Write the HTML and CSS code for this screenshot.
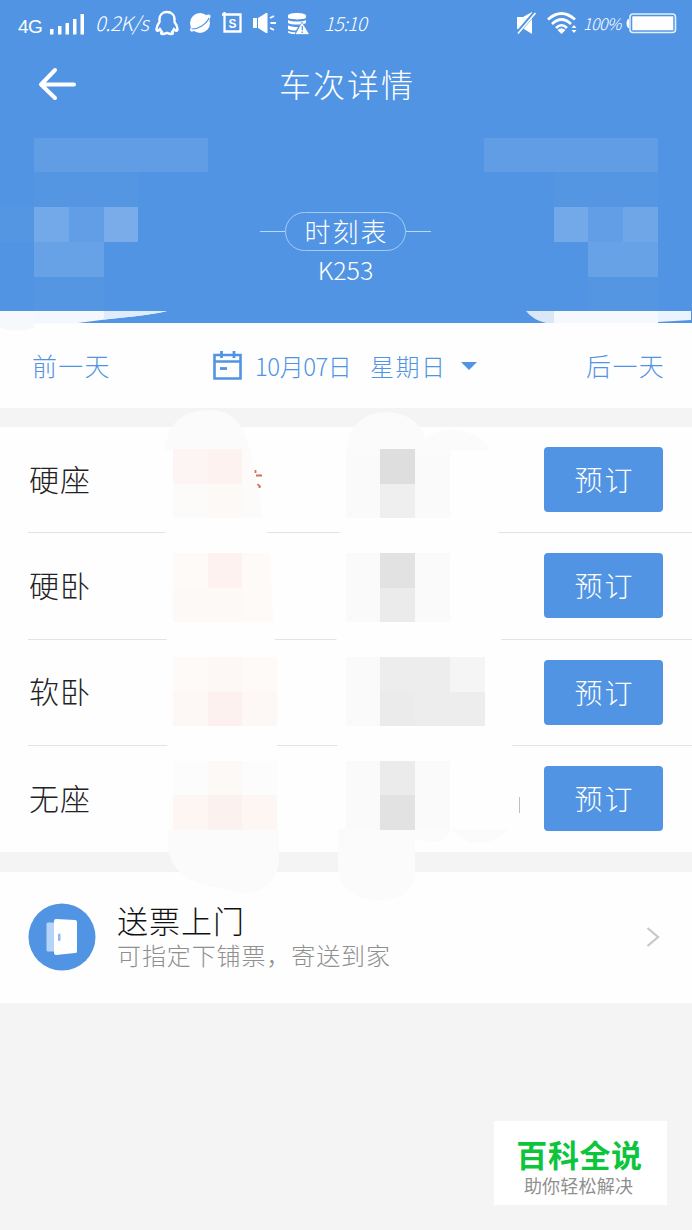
FILE: index.html
```html
<!DOCTYPE html>
<html lang="zh-CN">
<head>
<meta charset="utf-8">
<title>车次详情</title>
<link rel="stylesheet" href="styles.css">
</head>
<body>
<div class="screen">
  <header class="hero">
    <div class="status">
      <div class="status-left">
        <span class="net">4G</span>
        <svg class="signal" width="36" height="22" viewBox="0 0 36 22" fill="#fff"><path d="M1 16h3.500v5.500H1zM9 13h3.500v8.500H9zM16.500 10H20v11.500h-3.500zM24 6h3.500v15.500H24zM31.500 1H35v20.500h-3.500z"/></svg>
        <span class="speed">0.2K/s</span>
        <svg class="qq" width="24" height="26" viewBox="0 0 24 26" fill="none" stroke="#fff" stroke-width="2.400" stroke-linejoin="round" stroke-linecap="round"><path d="M12 2C7.500 2 4.500 5 4.500 9v3C3 14 1.500 16.500 1.500 19c0 1 .5 1.800 1.200 1.800.8 0 1.700-1 2.300-2 .4 1.400 1 2.300 2 3.100C4.500 23.800 7 25 12 22.800c5 2.200 7.500 1 5-.9 1-.8 1.600-1.700 2-3.100.6 1 1.500 2 2.300 2 .7 0 1.200-.8 1.200-1.800 0-2.500-1.500-5-3-7V9C19.500 5 16.500 2 12 2z"/></svg>
        <svg class="ball" width="23" height="22" viewBox="0 0 23 22"><circle cx="11" cy="11" r="10" fill="#fff"/><path d="M17 3q5-1.500 4.500 2T17 12zM3 14q-3 3.500-1.500 5T7 18z" fill="#fff"/><path d="M2.500 17C9 17.500 17.500 12 20 6" fill="none" stroke="#5194e3" stroke-width="1.100"/></svg>
        <svg class="box" width="21" height="22" viewBox="0 0 21 22"><path d="M0 2.500h18.500v17H2.500V0" fill="none" stroke="#fff" stroke-width="2.300"/><text x="10.500" y="15.500" text-anchor="middle" class="box-letter">S</text></svg>
        <svg class="speaker" width="25" height="22" viewBox="0 0 25 22" fill="#fff"><path d="M1 6h4v10H1zM6 6l8-5h1.500v20H14l-8-5z"/><path d="M18 6l4-2M18.500 11H24M18 16l4 2" stroke="#fff" stroke-width="1.800"/></svg>
        <svg class="db" width="23" height="23" viewBox="0 0 23 23"><path fill="#fff" d="M1 3.500C1 0 19 0 19 3.500v2C19 8 1 8 1 5.500zM1 8c3 2 15 2 18 0v3C16 13 4 13 1 11zM1 13.500c3 1.500 7 1.500 10 1.500l-2 3.500c-3 0-6-.5-8-1.500zM1 19c2 1 5 1.200 7.500 1.300L8 22c-3 0-5-.5-7-1.500z"/><path d="M15 10l7.500 12.500H8z" fill="#fff" stroke="#5194e3" stroke-width=".7"/><path d="M15.300 14v4.200m0 1.300v1.500" stroke="#5194e3" stroke-width="1.300"/></svg>
        <span class="clock">15:10</span>
      </div>
      <div class="status-right">
        <svg class="mute" width="22" height="24" viewBox="0 0 22 24"><path fill="#fff" d="M2 6h6l9-5v22l-8-5H2z"/><path d="M2 22.500L20 1.500" stroke="#5194e3" stroke-width="4"/><path d="M3 22.500L20.500 2" stroke="#fff" stroke-width="1.600"/></svg>
        <svg class="wifi" width="31" height="23" viewBox="0 0 31 23"><g fill="none" stroke="#fff" stroke-width="2.700"><path d="M1 7.500Q14.500-4.500 28 7.500"/><path d="M5 12Q14.500 3 24 12"/><path d="M9 16Q14.500 10.500 20 16"/></g><path fill="#fff" d="M10.500 18q4-3.500 8 0l-4 4zM24.500 16l2.500-3 2.500 3zM24.500 18h5L27 21z"/></svg>
        <span class="percent">100%</span>
        <svg class="battery" width="51" height="21" viewBox="0 0 51 21"><rect x="4" y="1" width="45.500" height="18.500" rx="3" fill="none" stroke="#e1f2ff" stroke-width="1.600"/><rect x="6.300" y="3.300" width="41" height="14" fill="#fff"/><path d="M3 6v9H2q-1.500-1-1.500-4.500T2 6z" fill="#fff"/></svg>
      </div>
    </div>
    <div class="titlebar">
      <svg class="back" width="40" height="34" viewBox="0 0 40 34" fill="none" stroke="#fff" stroke-width="4" stroke-linecap="round" stroke-linejoin="round"><path d="M17 3L3 17.500l14 13.500M3.500 17.500H36"/></svg>
      <h1 class="title">车次详情</h1>
    </div>
    <div class="timetable">
      <div class="timetable-line"><i class="rule"></i><span class="pill">时刻表</span><i class="rule"></i></div>
      <div class="train">K253</div>
    </div>
    <svg class="hero-mosaic" width="692" height="340" viewBox="0 0 692 340">
      <g fill="#fff">
        <path opacity=".09" d="M34 138h174v34H34zM484 138h174v34H484z"/>
        <path opacity=".025" d="M34 172h104v35H34zM554 172h104v35H554zM0 207h34v35H0zM34 277h70v34H34zM588 277h70v34h-70z"/>
        <path opacity=".2" d="M34 207h35v35H34zM554 207h34v35h-34z"/>
        <path opacity=".1" d="M69 207h35v35H69zM588 207h35v35h-35z"/>
        <path opacity=".23" d="M104 207h34v35h-34z"/>
        <path opacity=".17" d="M623 207h35v35h-35z"/>
        <path opacity=".13" d="M34 242h70v35H34zM588 242h70v35h-70z"/>
      </g>
      <path fill="#f3f8fe" d="M0 311h167q-15 4-50 7l-43 5.500H0z"/>
      <path fill="#dfecfb" d="M104 311h63q-15 4-63 8.500z"/>
      <path fill="#f6f9fc" d="M0 311h34v17q-20 6-34-1z"/>
      <path fill="#d9e7f7" d="M526 311h28v12h-8q-13-3-20-12z"/>
      <path fill="#f5f9fe" d="M554 311h104v12H554z"/><path fill="#e9f4fe" d="M658 311h33v9l-33 2z"/>
    </svg>
  </header>

  <nav class="dates">
    <span class="day prev">前一天</span>
    <div class="picker">
      <svg width="29" height="30" viewBox="0 0 29 30" fill="none" stroke="#5194e3"><path d="M1.500 4h26v23.500h-26zM1.500 10.500h26" stroke-width="2.600"/><path d="M8.500 0v7M21 0v7" stroke-width="2.800"/><path d="M7 17.500h7" stroke-width="2.800"/></svg>
      <span class="date">10月07日</span>
      <span class="weekday">星期日</span>
      <i class="caret"></i>
    </div>
    <span class="day next">后一天</span>
  </nav>

  <section class="seats">
    <div class="seat"><span class="seat-name">硬座</span><button class="book">预订</button></div>
    <div class="seat"><span class="seat-name">硬卧</span><button class="book">预订</button></div>
    <div class="seat"><span class="seat-name">软卧</span><button class="book">预订</button></div>
    <div class="seat"><span class="seat-name">无座</span><button class="book">预订</button></div>
    <svg class="seats-mosaic" width="692" height="510" viewBox="0 400 692 510">
      <path fill="#fbfbfb" d="M165 450C167 424 182 410 211 410c22 0 36 18 38 40zM348 450c-1-22 15-38 38-38 21 0 35 11 39 28 12-15 52-14 65 10zM168 829h111v30c-1 22-15 34-40 34l-18-5c-29-3-50-16-53-40zM338 829h77v42c0 20-15 29-36 29-26 0-41-13-41-35z"/>
      <path fill="#fbfbfb" d="M415 829h35q-2 13-22 13l-13-3zM452 829h56q-10 14-30 14-15 0-26-14z"/>
      <path fill="#fefefe" d="M165 450h85l17 80 8 110 3 190H168zM346 450h147l5 78 4 140 10 80v81H338l-2-250z"/>
      <path fill="#fdf5f3" d="M173 449h35v35h-35z"/><path fill="#fdf2f0" d="M208 449h34v35h-34zM208 553h34v35h-34z"/>
      <path fill="#fcfbfa" d="M173 484h35v34h-35zM242 449h8l13 69h-21z"/><path fill="#fdf9f7" d="M208 484h34v34h-34z"/>
      <path fill="#fefaf8" d="M173 553h35v35h-35zM242 553h28l3 69h-31z"/><path fill="#fdf9f7" d="M173 588h69v34h-69z"/>
      <path fill="#fefaf8" d="M173 657h35v35h-35zM242 657h35v35h-35z"/><path fill="#fdf7f5" d="M208 657h34v35h-34zM173 692h104v34H173z"/><path fill="#fcf1ef" d="M208 692h34v34h-34z"/>
      <path fill="#fcfcfc" d="M173 761h104v34H173z"/><path fill="#fdf9f6" d="M208 761h34v34h-34z"/><path fill="#fdf6f3" d="M173 795h104v35H173z"/><path fill="#fbf1ef" d="M208 795h34v35h-34z"/>
      <path fill="#fafafa" d="M346 449h104v69H346zM346 553h104v69H346zM346 657h35v69h-35zM346 761h104v69H346z"/>
      <path fill="#dedede" d="M380 449h35v35h-35z"/><path fill="#efefef" d="M380 484h35v34h-35z"/>
      <path fill="#e2e2e2" d="M380 553h35v35h-35zM380 795h35v35h-35z"/><path fill="#ebebeb" d="M380 588h35v34h-35zM380 692h35v34h-35zM380 761h35v34h-35z"/>
      <path fill="#ededed" d="M380 657h70v35h-70zM415 692h70v34h-70z"/><path fill="#f5f5f5" d="M450 657h35v35h-35z"/>
      <path fill="none" stroke="#dc6b5c" stroke-width="1.800" d="M255.500 470v3M256 475.500h6M257.500 484l3 3.500m-1-2.500v3"/>
      <path fill="none" stroke="#c0c0c0" d="M519.500 797v16"/>
    </svg>
  </section>

  <section class="delivery">
    <svg class="door" width="68" height="68" viewBox="0 0 68 68"><circle cx="34" cy="34" r="33.500" fill="#5194e3"/><path fill="#b6d4f7" d="M18.500 21q0-1.500 1.500-1.500h7v29h-7q-1.500 0-1.500-1.500z"/><path fill="#fff" d="M26 18q0-2 2-2l19 1q2 0 2 2v29.500q0 1.500-2 1.500l-19 2q-2 0-2-2z"/><rect x="30" y="30.500" width="2.500" height="7.500" rx="1" fill="#8eb9ef"/></svg>
    <div class="delivery-copy">
      <h2 class="delivery-title">送票上门</h2>
      <p class="delivery-note">可指定下铺票，寄送到家</p>
    </div>
    <svg class="chevron" width="14" height="20" viewBox="0 0 14 20" fill="none" stroke="#c8c8c8" stroke-width="2.300"><path d="M1.500 1L12 10 1.500 19"/></svg>
  </section>

  <aside class="stamp">
    <div class="stamp-name">百科全说</div>
    <div class="stamp-tag">助你轻松解决</div>
  </aside>
</div>
</body>
</html>
```
FILE: styles.css
```css
* { box-sizing: border-box; margin: 0; padding: 0; }
body { background: #f4f4f4; font-family: "Noto Sans CJK SC", sans-serif; font-weight: 300; }
svg { display: block; flex: none; }
.screen { position: relative; width: 692px; height: 1230px; overflow: hidden; background: #f4f4f4; }

.hero { position: relative; height: 323px; background: #5194e3; color: #fff; }
.hero-mosaic { position: absolute; left: 0; top: 0; z-index: 1; }
.status { display: flex; justify-content: space-between; height: 46px; padding: 0 15px 0 18px; }
.status-left, .status-right { display: flex; align-items: center; white-space: nowrap; }
.status span { line-height: 24px; flex: none; }
.status .net { width: 31px; padding-top: 7px; font-family: "Liberation Sans", sans-serif; font-size: 19px; font-weight: 400; letter-spacing: -.5px; }
.signal { margin-top: 2px; }
.status .speed { width: 60px; margin-left: 10px; font-size: 20px; font-style: italic; letter-spacing: -.4px; }
.ball { margin-left: 10px; }
.box { margin-left: 10px; }
.box-letter { font: bold 12px "Liberation Sans", sans-serif; fill: #fff; }
.speaker { margin-left: 9px; }
.db { margin-left: 10px; }
.status .clock { margin-left: 14px; font-size: 19px; font-style: italic; letter-spacing: -.6px; }
.wifi { margin-left: 10px; }
.status .percent { width: 41px; margin-left: 5px; font-size: 16px; font-style: italic; letter-spacing: -.6px; }
.battery { margin-left: 2px; }

.titlebar { display: grid; grid-template-columns: 1fr auto 1fr; align-items: center; height: 76px; padding: 0 38px; }
.title { font-size: 32px; line-height: 40px; font-weight: 300; letter-spacing: 2px; margin-right: -2px; padding-bottom: 3px; }
.timetable { display: flex; flex-direction: column; align-items: center; padding: 90px 1px 0 0; }
.timetable-line { display: flex; align-items: center; }
.rule { width: 25px; height: 1px; background: #b9d9fa; }
.pill { display: flex; align-items: center; justify-content: center; width: 121px; height: 39px; border: 1px solid #a4cbf7; border-radius: 20px; font-size: 26px; letter-spacing: 2px; padding: 0 0 2px 2px; }
.train { font-size: 25px; line-height: 36px; }

.dates { display: flex; align-items: center; justify-content: space-between; height: 85px; padding: 0 27px 0 32px; background: #fefefe; color: #5194e3; white-space: nowrap; }
.day { padding-bottom: 2px; font-size: 25px; letter-spacing: 1.300px; }
.picker { display: flex; align-items: center; margin-right: 7px; }
.date { margin-left: 13px; width: 101px; padding-bottom: 1px; font-size: 24px; letter-spacing: -.5px; }
.weekday { margin-left: 14px; width: 78px; padding-bottom: 1px; font-size: 24px; letter-spacing: 1.500px; }
.caret { margin-left: 13px; border: 8px solid transparent; border-top-color: #5194e3; border-bottom: 0; }

.seats { position: relative; height: 425px; margin-top: 19px; background: #fefefe; }
.seats-mosaic { position: absolute; left: 0; top: -27px; z-index: 1; pointer-events: none; }
.seat { display: flex; align-items: center; justify-content: space-between; height: 106.300px; margin-left: 28px; padding-right: 29px; border-bottom: 1px solid #e3e3e3; }
.seat:nth-child(4) { border-bottom: 0; padding-bottom: 1px; }
.seat-name { padding: 0 0 4px 1px; font-size: 30px; letter-spacing: 1px; color: #222; }
.book { width: 119px; height: 65px; border: 0; border-radius: 4px; background: #5194e3; color: #fff; font: 300 28px "Noto Sans CJK SC", sans-serif; letter-spacing: 2px; padding: 0 0 1px 2px; }

.delivery { display: flex; align-items: center; height: 131px; margin-top: 20px; padding: 0 32px 0 28px; background: #fefefe; }
.door { margin-bottom: 2px; }
.delivery-copy { flex: 1; margin: 0 0 2px 21px; }
.delivery-title { font-size: 31px; line-height: 36px; font-weight: 300; letter-spacing: 1px; color: #111; }
.delivery-note { font-size: 24px; line-height: 34px; letter-spacing: .9px; color: #8f8f8f; }
.chevron { margin-bottom: 1px; }

.stamp { position: absolute; left: 494px; top: 1121px; width: 173px; height: 84px; padding-top: 12px; background: #fff; text-align: center; }
.stamp-name { font-size: 31px; line-height: 42px; font-weight: 700; letter-spacing: .6px; color: #0dc53c; padding-right: 2px; }
.stamp-tag { font-size: 18px; line-height: 20px; font-weight: 400; letter-spacing: .2px; color: #8f8f8f; padding-right: 4px; }
```
